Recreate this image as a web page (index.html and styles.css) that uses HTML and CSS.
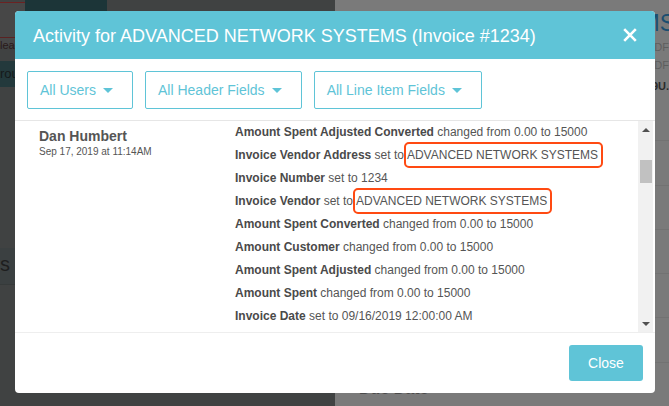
FILE: index.html
```html
<!DOCTYPE html>
<html lang="en">
<head>
<meta charset="utf-8">
<title>Activity</title>
<link rel="stylesheet" href="styles.css">
</head>
<body>
<div class="page">
  <div class="page-left">
    <div class="pl-top">
      <div class="pl-tab"><span class="pl-tab-text">lea</span></div>
      <div class="pl-dark"></div>
    </div>
    <div class="pl-bar"><span>rou</span></div>
    <div class="pl-spacer"></div>
    <div class="pl-block"><span>s</span></div>
  </div>
  <div class="page-right">
    <div class="pr-head">
      <div class="pr-title">MS</div>
      <div class="pr-line">DF</div>
      <div class="pr-line">DF</div>
      <div class="pr-line pr-strong">9U.</div>
    </div>
    <div class="pr-row"></div>
    <div class="pr-row"></div>
    <div class="pr-row"></div>
    <div class="pr-row"></div>
    <div class="pr-row"></div>
    <div class="pr-row pr-last"><span class="pr-due">Due Date</span></div>
  </div>
</div>

<div class="modal">
  <div class="modal-header">
    <h1 class="modal-title">Activity for ADVANCED NETWORK SYSTEMS (Invoice #1234)</h1>
    <button class="modal-close" aria-label="Close">
      <svg width="14" height="14" viewBox="0 0 14 14"><path d="M1.2 1.2 L12.8 12.8 M12.8 1.2 L1.2 12.8" stroke="#fff" stroke-width="2.6" stroke-linecap="butt"/></svg>
    </button>
  </div>
  <div class="filters">
    <button class="filter">All Users<span class="caret"></span></button>
    <button class="filter">All Header Fields<span class="caret"></span></button>
    <button class="filter">All Line Item Fields<span class="caret"></span></button>
  </div>
  <div class="modal-body">
    <div class="activity">
      <div class="who">
        <div class="who-name">Dan Humbert</div>
        <div class="who-date">Sep 17, 2019 at 11:14AM</div>
      </div>
      <div class="changes">
        <div class="change"><b>Amount Spent Adjusted Converted</b> changed from 0.00 to 15000</div>
        <div class="change"><b>Invoice Vendor Address</b> set to<span class="hl">ADVANCED NETWORK SYSTEMS</span></div>
        <div class="change"><b>Invoice Number</b> set to 1234</div>
        <div class="change"><b>Invoice Vendor</b> set to<span class="hl">ADVANCED NETWORK SYSTEMS</span></div>
        <div class="change"><b>Amount Spent Converted</b> changed from 0.00 to 15000</div>
        <div class="change"><b>Amount Customer</b> changed from 0.00 to 15000</div>
        <div class="change"><b>Amount Spent Adjusted</b> changed from 0.00 to 15000</div>
        <div class="change"><b>Amount Spent</b> changed from 0.00 to 15000</div>
        <div class="change"><b>Invoice Date</b> set to 09/16/2019 12:00:00 AM</div>
      </div>
    </div>
    <div class="scrollbar">
      <div class="sb-btn"><span class="sb-up"></span></div>
      <div class="sb-track"><div class="sb-thumb"></div></div>
      <div class="sb-btn"><span class="sb-down"></span></div>
    </div>
  </div>
  <div class="modal-footer">
    <button class="btn-close">Close</button>
  </div>
</div>
</body>
</html>
```

FILE: styles.css
```css
* { box-sizing: border-box; }
html, body { margin: 0; padding: 0; }
body {
  width: 669px;
  height: 406px;
  overflow: hidden;
  font-family: "Liberation Sans", Arial, sans-serif;
  position: relative;
}

/* dimmed page behind the modal */
.page {
  display: flex;
  width: 669px;
  height: 406px;
}
.page-left {
  width: 335px;
  background: #404242;
  display: flex;
  flex-direction: column;
}
.pl-top { display: flex; height: 61px; }
.pl-tab {
  width: 25px;
  height: 43px;
  background: #474747;
  border-top: 1px solid #6b2222;
  margin-top: 2px;
  position: relative;
}
.pl-tab::after {
  content: "";
  display: block;
  position: absolute;
  left: 0; right: 10px; top: 34px;
  border-top: 1px solid #5a2222;
}
.pl-tab-text {
  display: block;
  margin-top: 36px;
  margin-left: 0;
  font-size: 11px;
  line-height: 12px;
  color: #2a1a1a;
}
.pl-dark {
  width: 82px;
  height: 61px;
  background: #1c3538;
  border-radius: 0 0 3px 3px;
}
.pl-bar {
  height: 26px;
  width: 120px;
  background: #23393c;
}
.pl-bar span {
  display: block;
  margin-top: 5px;
  font-size: 13px;
  line-height: 16px;
  color: #151a1a;
}
.pl-spacer { height: 161px; }
.pl-block {
  height: 37px;
  width: 120px;
  background: #3b4041;
  border-bottom: 1px solid #363a3a;
}
.pl-block span {
  display: block;
  margin-top: 4px;
  font-size: 20px;
  line-height: 24px;
  color: #1e1e1e;
}

.page-right {
  flex: 1;
  background: #7a7a7a;
  display: flex;
  flex-direction: column;
  align-items: stretch;
  overflow: hidden;
}
.pr-head {
  height: 143px;
  display: flex;
  flex-direction: column;
  align-items: flex-end;
}
.pr-title {
  margin-top: 11px;
  margin-right: -6px;
  font-size: 23px;
  color: #1b4e70;
  line-height: 25px;
}
.pr-line {
  margin-top: 4px;
  font-size: 11px;
  line-height: 14px;
  color: #5e5e5e;
}
.pr-strong { color: #2a2a2a; font-weight: bold; margin-top: 7px; }
.pr-row {
  height: 45px;
  border-top: 1px solid #727272;
}
.pr-last { padding: 16px 0 0 24px; }
.pr-due {
  font-size: 16px;
  font-weight: bold;
  line-height: 19px;
  color: #4a4a4a;
}

/* modal */
.modal {
  position: absolute;
  left: 15px;
  top: 11px;
  width: 640px;
  height: 382px;
  background: #fff;
  border-radius: 4px;
  overflow: hidden;
  display: flex;
  flex-direction: column;
}
.modal-header {
  height: 48px;
  background: #5fc4d7;
  display: flex;
  align-items: center;
  justify-content: space-between;
  padding: 0 18px 0 18px;
  flex: none;
}
.modal-title {
  margin: 0;
  font-size: 18px;
  font-weight: normal;
  color: #fff;
  line-height: 24px;
  padding-top: 2px;
}
.modal-close {
  border: 0;
  background: none;
  padding: 0;
  width: 14px;
  height: 14px;
  display: block;
}
.modal-close svg { display: block; }

.filters {
  flex: none;
  display: flex;
  gap: 12px;
  padding: 12px 12px 12px 12px;
  border-bottom: 1px solid #e6e6e6;
  height: 62px;
}
.filter {
  height: 38px;
  border: 1px solid #5fc4d7;
  border-radius: 2px;
  background: #fff;
  color: #5fc4d7;
  font-family: "Liberation Sans", Arial, sans-serif;
  font-size: 14px;
  padding: 0 19px 0 12px;
  display: flex;
  align-items: center;
  gap: 7px;
}
.caret {
  width: 0;
  height: 0;
  border-left: 5px solid transparent;
  border-right: 5px solid transparent;
  border-top: 5px solid #5fc4d7;
  margin-top: 1px;
}

.modal-body {
  flex: none;
  height: 211px;
  display: flex;
  overflow: hidden;
}
.activity {
  flex: 1;
  display: flex;
  overflow: hidden;
}
.who {
  width: 220px;
  padding: 6px 0 0 24px;
  flex: none;
}
.who-name {
  font-size: 14px;
  font-weight: bold;
  line-height: 18px;
  color: #555;
}
.who-date {
  font-size: 10px;
  line-height: 14px;
  color: #555;
}
.changes {
  flex: 1;
  font-size: 12px;
  line-height: 23px;
  color: #555;
}
.change { white-space: nowrap; }
.change b { color: #4a4a4a; }
.hl {
  border: 2px solid #ff4a12;
  border-radius: 5px;
  padding: 4px 3px 4px 1px;
}

.scrollbar {
  width: 15px;
  margin-right: 2px;
  background: #f1f1f1;
  display: flex;
  flex-direction: column;
  flex: none;
}
.sb-btn {
  height: 17px;
  display: flex;
  align-items: center;
  justify-content: center;
}
.sb-up, .sb-down {
  width: 0; height: 0;
  border-left: 4px solid transparent;
  border-right: 4px solid transparent;
}
.sb-up { border-bottom: 4px solid #505050; }
.sb-down { border-top: 4px solid #505050; }
.sb-track { flex: 1; padding: 22px 1px 0 2px; }
.sb-thumb { height: 23px; background: #c1c1c1; }

.modal-footer {
  flex: 1;
  border-top: 1px solid #eeeeee;
  display: flex;
  justify-content: flex-end;
  align-items: flex-start;
  padding: 12px 12px 0 0;
}
.btn-close {
  width: 74px;
  height: 36px;
  border: 0;
  border-radius: 3px;
  background: #5fc4d7;
  color: #fff;
  font-family: "Liberation Sans", Arial, sans-serif;
  font-size: 14px;
  padding: 0;
}
```
